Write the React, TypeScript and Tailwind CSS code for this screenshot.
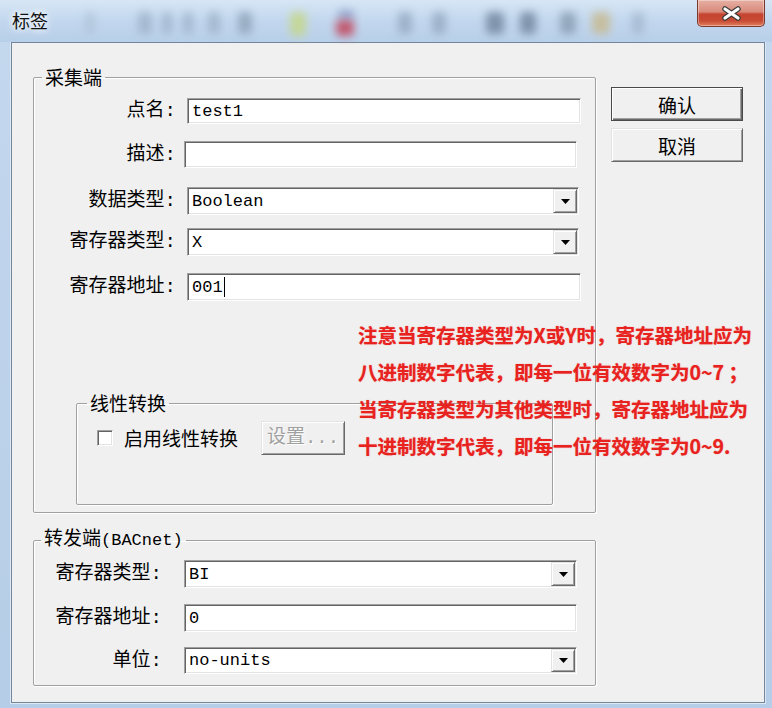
import React from "react";

const CJK = "[font-family:'Noto_Sans_CJK_SC',sans-serif]";
const MONO = "[font-family:'Liberation_Mono','Noto_Sans_CJK_SC',monospace]";
const sunken =
  "bg-white border border-t-[#a0a0a0] border-l-[#a0a0a0] border-b-white border-r-white shadow-[inset_1px_1px_0_#646464,inset_-1px_-1px_0_#e3e3e3]";
const raised =
  "bg-[#f0f0f0] border border-t-[#e3e3e3] border-l-[#e3e3e3] border-b-[#696969] border-r-[#696969] shadow-[inset_1px_1px_0_#ffffff,inset_-1px_-1px_0_#a0a0a0]";
const groupBox =
  "border border-[#a0a0a0] rounded-[2px] shadow-[1px_1px_0_#ffffff,inset_1px_1px_0_#ffffff]";

function Arrow() {
  return (
    <svg width="9" height="5" viewBox="0 0 9 5">
      <path d="M0 0H9L4.5 5Z" fill="#000" />
    </svg>
  );
}

function TextBox({ cls, value, caret }: { cls: string; value: string; caret?: boolean }) {
  return (
    <div className={`${sunken} ${cls} flex items-center p-px`}>
      <span className={`${MONO} text-[17px] leading-none text-black pl-[3px] whitespace-pre`}>{value}</span>
      {caret && <span className="ml-px w-px h-[20px] bg-black" />}
    </div>
  );
}

function Combo({ cls, value }: { cls: string; value: string }) {
  return (
    <div className={`${sunken} ${cls} flex p-px`}>
      <div className="flex-1 flex items-center">
        <span className={`${MONO} text-[17px] leading-none text-black pl-[3px] whitespace-pre`}>{value}</span>
      </div>
      <div className={`${raised} w-[24px] flex items-center justify-center`}>
        <Arrow />
      </div>
    </div>
  );
}

function Label({ cls, text }: { cls: string; text: string }) {
  return (
    <div className={`${MONO} ${cls} shrink-0 text-right text-[19px] leading-[24px] text-black whitespace-nowrap`}>
      {text}:
    </div>
  );
}

function Spots() {
  return (
    <>
      <div className="absolute left-[86px] top-[12px] w-[8px] h-[22px] rounded bg-[#a9bccf] blur-[4px] opacity-70" />
      <div className="absolute left-[138px] top-[12px] w-[14px] h-[22px] rounded bg-[#98adc3] blur-[4px] opacity-70" />
      <div className="absolute left-[162px] top-[12px] w-[10px] h-[22px] rounded bg-[#98adc3] blur-[4px] opacity-70" />
      <div className="absolute left-[183px] top-[12px] w-[10px] h-[22px] rounded bg-[#98adc3] blur-[4px] opacity-70" />
      <div className="absolute left-[208px] top-[12px] w-[12px] h-[22px] rounded bg-[#98adc3] blur-[4px] opacity-70" />
      <div className="absolute left-[238px] top-[12px] w-[14px] h-[22px] rounded bg-[#8da2b8] blur-[4px] opacity-80" />
      <div className="absolute left-[290px] top-[12px] w-[16px] h-[24px] rounded bg-[#c6d884] blur-[4px] opacity-80" />
      <div className="absolute left-[338px] top-[10px] w-[16px] h-[10px] rounded bg-[#7f8fbf] blur-[4px] opacity-70" />
      <div className="absolute left-[336px] top-[20px] w-[18px] h-[16px] rounded bg-[#c23c52] blur-[4px] opacity-80" />
      <div className="absolute left-[398px] top-[12px] w-[14px] h-[22px] rounded bg-[#8ea3ba] blur-[4px] opacity-70" />
      <div className="absolute left-[432px] top-[12px] w-[14px] h-[22px] rounded bg-[#8ea3ba] blur-[4px] opacity-70" />
      <div className="absolute left-[486px] top-[12px] w-[18px] h-[22px] rounded bg-[#6f849b] blur-[4px] opacity-80" />
      <div className="absolute left-[520px] top-[12px] w-[16px] h-[22px] rounded bg-[#6f849b] blur-[4px] opacity-80" />
      <div className="absolute left-[560px] top-[12px] w-[16px] h-[22px] rounded bg-[#7f93a9] blur-[4px] opacity-70" />
      <div className="absolute left-[592px] top-[12px] w-[18px] h-[22px] rounded bg-[#c8b98c] blur-[4px] opacity-80" />
      <div className="absolute left-[632px] top-[12px] w-[12px] h-[22px] rounded bg-[#98adc3] blur-[4px] opacity-60" />
    </>
  );
}

export default function App() {
  return (
    <div className="relative w-[772px] h-[708px] overflow-hidden flex flex-col bg-[linear-gradient(to_bottom,#c4d8ee,#b6cde7)]">
      {/* title bar */}
      <div className="relative h-[42px] shrink-0 flex items-start bg-[linear-gradient(to_bottom,#d7e6f5,#c2d7ee_50%,#b8cfe9)]">
        <Spots />
        <div
          className={`${CJK} relative pl-[12px] pt-[8px] text-[18px] leading-[24px] text-[#111111] [text-shadow:0_0_6px_#ffffff,0_0_10px_#ffffff]`}
        >
          标签
        </div>
        <div className="relative ml-auto mr-[7px] w-[68px] h-[27px] rounded-b-[5px] border border-t-0 border-[#7a3a30] bg-[linear-gradient(to_bottom,#e6b0a4_0%,#d98b7b_45%,#c5432f_55%,#c84b35_80%,#e07f5c_100%)] shadow-[inset_0_0_0_1px_rgba(255,255,255,0.35)] flex items-center justify-center">
          <svg width="21" height="15" viewBox="0 0 21 15">
            <path d="M4 3L17 12M17 3L4 12" stroke="#3a3a3a" strokeWidth="5.5" strokeLinecap="round" />
            <path d="M4 3L17 12M17 3L4 12" stroke="#ffffff" strokeWidth="3.2" strokeLinecap="round" />
          </svg>
        </div>
      </div>

      {/* client area */}
      <div className="ml-[11px] mr-[7px] h-[661px] border border-[#73879c] shadow-[0_0_0_1px_#dde8f3] bg-[#f0f0f0] flex">
        {/* left column */}
        <div className="ml-[21px] mt-[24px] flex flex-col">
          <fieldset className={`${groupBox} w-[563px] h-[446px]`}>
            <legend className={`${CJK} ml-[8px] px-[3px] text-[19px] leading-[20px] text-black`}>采集端</legend>
            <div className="flex flex-col">
              <div className="mt-[11px] flex items-center">
                <Label cls="w-[142px]" text="点名" />
                <TextBox cls="ml-[11px] w-[394px] h-[26px]" value="test1" />
              </div>
              <div className="mt-[17px] flex items-center">
                <Label cls="w-[142px]" text="描述" />
                <TextBox cls="ml-[8px] w-[393px] h-[27px]" value="" />
              </div>
              <div className="mt-[19px] flex items-center">
                <Label cls="w-[142px]" text="数据类型" />
                <Combo cls="ml-[11px] w-[392px] h-[28px]" value="Boolean" />
              </div>
              <div className="mt-[13px] flex items-center">
                <Label cls="w-[142px]" text="寄存器类型" />
                <Combo cls="ml-[11px] w-[392px] h-[28px]" value="X" />
              </div>
              <div className="mt-[17px] flex items-center">
                <Label cls="w-[142px]" text="寄存器地址" />
                <TextBox cls="ml-[11px] w-[394px] h-[28px]" value="001" caret />
              </div>

              <fieldset className={`${groupBox} mt-[92px] ml-[42px] w-[477px] h-[112px]`}>
                <legend className={`${CJK} ml-[10px] px-[3px] text-[19px] leading-[20px] text-black`}>线性转换</legend>
                <div className="mt-[8px] h-[34px] flex items-center">
                  <div className={`${sunken} ml-[20px] w-[16px] h-[16px]`} />
                  <div className={`${CJK} ml-[11px] w-[116px] text-[19px] leading-[24px] text-black whitespace-nowrap`}>
                    启用线性转换
                  </div>
                  <div
                    className={`${raised} ml-[21px] w-[84px] h-[34px] flex items-center justify-center ${MONO} text-[19px] leading-none text-[#a0a0a0] [text-shadow:1px_1px_0_#ffffff]`}
                  >
                    设置...
                  </div>
                </div>
              </fieldset>
            </div>
          </fieldset>

          <fieldset className={`${groupBox} mt-[17px] w-[563px] h-[156px]`}>
            <legend className={`${MONO} ml-[7px] px-[3px] text-[19px] leading-[20px] text-black whitespace-nowrap`}>
              转发端<span className="text-[17px]">(BACnet)</span>
            </legend>
            <div className="flex flex-col">
              <div className="mt-[9px] flex items-center">
                <Label cls="w-[128px]" text="寄存器类型" />
                <Combo cls="ml-[22px] w-[393px] h-[28px]" value="BI" />
              </div>
              <div className="mt-[16px] flex items-center">
                <Label cls="w-[128px]" text="寄存器地址" />
                <TextBox cls="ml-[22px] w-[393px] h-[28px]" value="0" />
              </div>
              <div className="mt-[15px] flex items-center">
                <Label cls="w-[128px]" text="单位" />
                <Combo cls="ml-[22px] w-[393px] h-[27px]" value="no-units" />
              </div>
            </div>
          </fieldset>
        </div>

        {/* buttons column */}
        <div className="ml-[15px] mt-[44px] flex flex-col gap-[7px]">
          <div
            className={`${CJK} w-[132px] h-[34px] border border-[#4a4a4a] bg-[#f0f0f0] shadow-[inset_1px_1px_0_#ffffff,inset_-1px_-1px_0_#696969,inset_-2px_-2px_0_#a0a0a0] flex items-center justify-center text-[19px] leading-none text-black`}
          >
            确认
          </div>
          <div className={`${CJK} ${raised} w-[132px] h-[34px] flex items-center justify-center text-[19px] leading-none text-black`}>
            取消
          </div>
        </div>
      </div>

      {/* red annotation overlay */}
      <div
        className={`${CJK} absolute left-[358px] top-[316px] font-bold text-[19.5px] leading-[37px] text-[#e8231f] whitespace-nowrap [text-shadow:0_0_1px_rgba(232,35,31,0.6)]`}
      >
        <div>注意当寄存器类型为X或Y时，寄存器地址应为</div>
        <div>八进制数字代表，即每一位有效数字为0~7 ；</div>
        <div>当寄存器类型为其他类型时，寄存器地址应为</div>
        <div>十进制数字代表，即每一位有效数字为0~9.</div>
      </div>
    </div>
  );
}
